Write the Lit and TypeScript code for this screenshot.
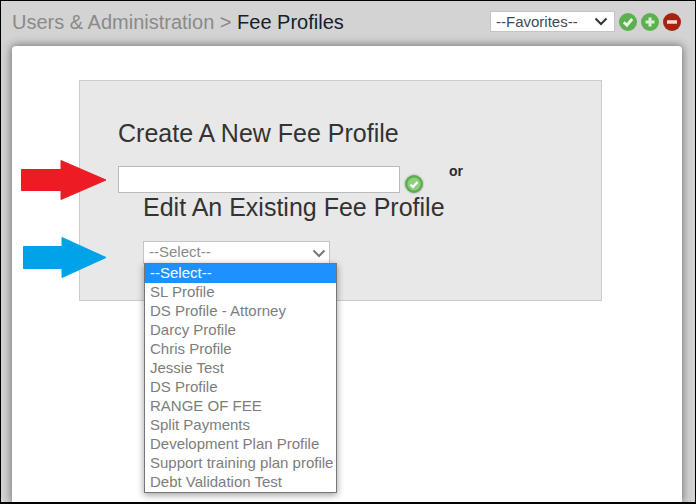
import { LitElement, html, css, svg } from "lit";
import { customElement } from "lit/decorators.js";

const OPTIONS = ["--Select--","SL Profile","DS Profile - Attorney","Darcy Profile","Chris Profile","Jessie Test","DS Profile","RANGE OF FEE","Split Payments","Development Plan Profile","Support training plan profile","Debt Validation Test"];

const chevron = svg`<svg class="chev" width="14" height="9" viewBox="0 0 14 9"><path d="M1.500 1.500 7 7l5.500-5.500" fill="none" stroke="currentColor" stroke-width="2"/></svg>`;
const round = (bg: string, inner: unknown) => html`<svg class="ic" width="18" height="18" viewBox="0 0 18 18"><circle cx="9" cy="9" r="9" fill="${bg}"/>${inner}</svg>`;

@customElement("app-root")
export class AppRoot extends LitElement {
  static styles = css`
    :host { display: block; width: 697px; height: 504px; font-family: "Liberation Sans", Arial, sans-serif; }
    * { box-sizing: border-box; }
    .frame { width: 696px; height: 504px; border: 1px solid #000; border-width: 1px 1px 2px 1px; background: #d3d3d3; display: flex; flex-direction: column; overflow: hidden; position: relative; }
    .head { height: 45px; flex: none; display: flex; align-items: flex-start; justify-content: space-between; padding: 10px 14px 0 11px; }
    .crumb { font-size: 20px; line-height: 23px; color: #8a8a8a; }
    .crumb b { font-weight: 400; color: #14202e; }
    .tools { display: flex; align-items: center; gap: 4px; }
    .fav { width: 125px; height: 21px; background: #fff; border: 1px solid #c4c4c4; font-size: 15px; line-height: 19px; color: #3d4a5a; padding: 0 6px 0 5px; display: flex; align-items: center; justify-content: space-between; }
    .fav .chev { color: #333; }
    .ic { display: block; }
    .card { flex: 1; margin: 0 13px 0 11px; background: #fff; border-radius: 4px 4px 0 0; box-shadow: 0 0 8px 1px rgba(0,0,0,.45); padding: 34px 0 0 67px; }
    .panel { position: relative; width: 523px; height: 221px; background: #e8e8e8; border: 1px solid #ccc; padding: 37px 0 0 38px; }
    h2 { margin: 0; font-weight: 400; font-size: 25px; line-height: 30px; color: #333; }
    .row { display: flex; align-items: flex-start; margin-top: 18px; }
    .inp { width: 282px; height: 27px; background: #fff; border: 1px solid #bbb; }
    .ok { margin: 9px 0 0 5px; filter: drop-shadow(0 0 1px rgba(0,0,0,.3)); }
    .or { font-weight: 700; font-size: 14px; line-height: 16px; color: #2a2a2a; margin: -3px 0 0 26px; }
    .edit { margin: -1px 0 0 25px; }
    .sel { position: relative; width: 187px; height: 23px; margin: 19px 0 0 25px; background: #fff; border: 1px solid #c4c4c4; color: #8a8a8a; font-size: 15px; line-height: 20px; padding-left: 5px; }
    .sel .chev { position: absolute; right: 3px; top: 7px; color: #777; }
    .list { position: absolute; z-index: 2; left: 0; top: 21px; width: 193px; height: 230px; background: #fff; border: 1px solid #767676; box-shadow: 0 2px 7px rgba(0,0,0,.4); font-size: 15px; line-height: 17px; color: #7d7d7d; }
    .list div { height: 19px; padding-left: 5px; white-space: nowrap; }
    .list .on { background: #1e90ff; color: #fff; }
    .arrow { position: absolute; }
  `;

  render() {
    return html`<div class="frame">
      <div class="head">
        <div class="crumb">Users &amp; Administration &gt; <b>Fee Profiles</b></div>
        <div class="tools">
          <div class="fav"><span>--Favorites--</span>${chevron}</div>
          ${round("#5cb04f", svg`<path d="M4.800 9.300 7.900 12.200 13.200 6" fill="none" stroke="#e8f5e4" stroke-width="2.800"/>`)}
          ${round("#5cb04f", svg`<path d="M9 4.500v9M4.500 9h9" stroke="#d9efd4" stroke-width="3"/>`)}
          ${round("#a5230f", svg`<path d="M4 9h10" stroke="#f3dcd8" stroke-width="3.500"/>`)}
        </div>
      </div>
      <div class="card">
        <div class="panel">
          <h2>Create A New Fee Profile</h2>
          <div class="row">
            <div class="inp"></div>
            <svg class="ok" width="18" height="18" viewBox="0 0 18 18"><circle cx="9" cy="9" r="9" fill="#5fae4e"/><circle cx="9" cy="9" r="6.500" fill="#8fcf80"/><path d="M5.500 9.500 8 12l4.500-5" fill="none" stroke="#fff" stroke-width="2.200"/></svg>
            <div class="or">or</div>
          </div>
          <h2 class="edit">Edit An Existing Fee Profile</h2>
          <div class="sel">--Select--${chevron}
            <div class="list">${OPTIONS.map((o, i) => html`<div class="${i === 0 ? "on" : ""}">${o}</div>`)}</div>
          </div>
        </div>
      </div>
      <svg class="arrow" style="left:19px;top:158px" width="88" height="42" viewBox="0 0 88 42"><path d="M1.500 10.500H41V1.500L86 21 41 40.500V31.500H1.500Z" fill="#ed1c24" stroke="#ed1c24" stroke-linejoin="round"/></svg>
      <svg class="arrow" style="left:21px;top:235px" width="86" height="43" viewBox="0 0 86 43"><path d="M1.500 10.500H40V1.500L84 21.500 40 41.500V32.500H1.500Z" fill="#00a2e8" stroke="#00a2e8" stroke-linejoin="round"/></svg>
    </div>`;
  }
}
